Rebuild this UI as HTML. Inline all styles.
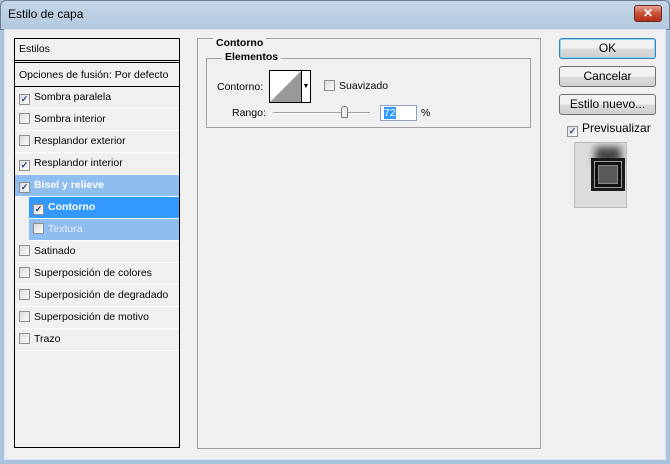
<!DOCTYPE html>
<html><head><style>
*{margin:0;padding:0;box-sizing:border-box}
body{width:670px;height:464px;background:#a9c3dc;font-family:"Liberation Sans",sans-serif;font-size:10.5px;color:#000;position:relative;overflow:hidden}
.abs{position:absolute}
.title{left:0;top:0;width:670px;height:30px;background:linear-gradient(#c5d6e8,#b3c9df);border-radius:6px 6px 0 0;border:1px solid #6d7f92}
.title span{position:absolute;left:7px;top:6px;font-size:12px;color:#000}
.close{left:634px;top:5px;width:28px;height:17px;border:1px solid #6b2a20;border-radius:3px;background:linear-gradient(#e9a592,#c9503a 50%,#b2301a);color:#fff;font-weight:bold;font-size:12px;text-align:center;line-height:15px}
.body{left:4px;top:29px;width:662px;height:431px;background:#f0f0f0;border:1px solid #d8e4ef}
.list{left:14px;top:38px;width:166px;height:410px;border:1px solid #000;background:#f0f0f0}
.row{position:absolute;left:0;width:164px;height:22px;border-bottom:1px solid #fff;line-height:21px;padding-left:4px;white-space:nowrap}
.cb{display:inline-block;width:11px;height:11px;border:1px solid #8e8f8f;background:linear-gradient(135deg,#dcdcdc,#fafafa);vertical-align:-2px;margin-right:4px;position:relative;font-size:9px;line-height:9px;text-align:center;color:#2a3f7a;font-weight:bold}
.sel{background:#8ebdf0;color:#fff;font-weight:bold}
.sel2{background:#3399ff;color:#fff;font-weight:bold}
.sel3{background:#8ebdf0;color:#e8f0fa}
.panel{left:197px;top:38px;width:344px;height:411px;border:1px solid #a0a0a0}
.grp{left:206px;top:58px;width:325px;height:70px;border:1px solid #a0a0a0}
.lbl{background:#f0f0f0;font-weight:bold;padding:0 3px}
.btn{left:559px;width:97px;height:21px;border:1px solid #707070;border-radius:3px;background:linear-gradient(#f2f2f2 50%,#dddddd 50%,#cfcfcf);text-align:center;line-height:19px;font-size:12px}
</style></head><body>
<div class="abs title"><span>Estilo de capa</span></div>
<div class="abs close">✕</div>
<div class="abs body"></div>
<div class="abs list">
 <div class="row" style="top:0;height:24px;border-bottom:3px double #000">Estilos</div>
 <div class="row" style="top:24px;height:24px;border-bottom:1px solid #000;line-height:24px">Opciones de fusión: Por defecto</div>
 <div class="row" style="top:48px"><span class="cb">✓</span>Sombra paralela</div>
 <div class="row" style="top:70px"><span class="cb"></span>Sombra interior</div>
 <div class="row" style="top:92px"><span class="cb"></span>Resplandor exterior</div>
 <div class="row" style="top:114px"><span class="cb">✓</span>Resplandor interior</div>
 <div class="row sel" style="top:136px"><span class="cb">✓</span>Bisel y relieve</div>
 <div class="row sel2" style="top:158px;left:14px;width:150px"><span class="cb">✓</span>Contorno</div>
 <div class="row sel3" style="top:180px;left:14px;width:150px"><span class="cb"></span>Textura</div>
 <div class="row" style="top:202px"><span class="cb"></span>Satinado</div>
 <div class="row" style="top:224px"><span class="cb"></span>Superposición de colores</div>
 <div class="row" style="top:246px"><span class="cb"></span>Superposición de degradado</div>
 <div class="row" style="top:268px"><span class="cb"></span>Superposición de motivo</div>
 <div class="row" style="top:290px"><span class="cb"></span>Trazo</div>
</div>
<div class="abs panel"></div>
<div class="abs lbl" style="left:213px;top:37px">Contorno</div>
<div class="abs grp"></div>
<div class="abs lbl" style="left:222px;top:51px">Elementos</div>
<div class="abs" style="left:217px;top:81px">Contorno:</div>
<div class="abs" style="left:269px;top:70px;width:42px;height:33px;border:1px solid #000;background:#fff">
 <svg width="31" height="31" style="position:absolute;left:0;top:0"><polygon points="0,31 31,0 31,31" fill="#999"/></svg>
 <div style="position:absolute;left:31px;top:0;width:9px;height:31px;border-left:1px solid #000;font-size:7px;text-align:center;line-height:31px">▼</div>
</div>
<div class="abs" style="left:324px;top:80px"><span class="cb"></span>Suavizado</div>
<div class="abs" style="left:232px;top:107px">Rango:</div>
<div class="abs" style="left:273px;top:112px;width:97px;height:2px;border-top:1px solid #a0a0a0;border-bottom:1px solid #fff"></div>
<div class="abs" style="left:341px;top:106px;width:7px;height:12px;border:1px solid #777;border-radius:3px 3px 1px 1px;background:#eee"></div>
<div class="abs" style="left:380px;top:105px;width:37px;height:16px;border:1px solid #8ea3c0;background:#fff"><span style="background:#3399ff;color:#fff;margin:1px 0 0 3px;display:inline-block;line-height:12px">72</span></div>
<div class="abs" style="left:421px;top:107px">%</div>
<div class="abs btn" style="top:38px;border-color:#3c7fb1;box-shadow:inset 0 0 0 1px #8fd3f5">OK</div>
<div class="abs btn" style="top:66px">Cancelar</div>
<div class="abs btn" style="top:94px">Estilo nuevo...</div>
<div class="abs" style="left:567px;top:121px;font-size:12px"><span class="cb">✓</span>Previsualizar</div>
<div class="abs" style="left:574px;top:142px;width:53px;height:66px;border:1px solid #bbb;background:#ddd;overflow:hidden">
 <div style="position:absolute;left:20px;top:4px;width:26px;height:18px;background:#444;filter:blur(4px)"></div>
 <div style="position:absolute;left:16px;top:15px;width:34px;height:33px;background:#111;border:3px solid #1a1a1a;box-shadow:inset 0 0 0 1px #999"><div style="position:absolute;left:4px;top:4px;right:4px;bottom:4px;background:#5a5a5a;border:1px solid #888"></div></div>
</div>
</body></html>
